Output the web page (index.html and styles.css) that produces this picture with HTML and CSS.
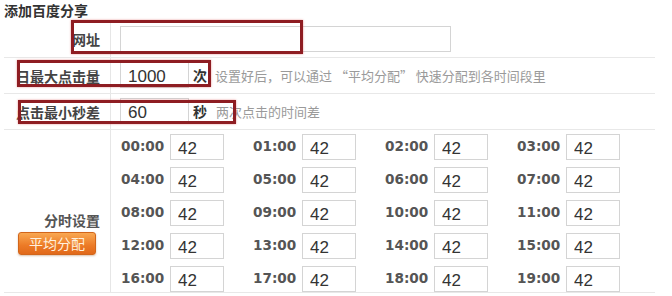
FILE: index.html
```html
<!DOCTYPE html>
<html lang="zh-CN">
<head>
<meta charset="utf-8">
<title>添加百度分享</title>
<link rel="stylesheet" href="styles.css">
</head>
<body>
<div class="page">
  <h1 class="title">添加百度分享</h1>
  <div class="form">
    <div class="row row-first">
      <div class="label">网址</div>
      <div class="field"><input class="txt url" type="text" value=""></div>
    </div>
    <div class="row">
      <div class="label">日最大点击量</div>
      <div class="field">
        <input class="txt num" type="text" value="1000">
        <span class="unit">次</span>
        <span class="hint">设置好后，可以通过 “平均分配” 快速分配到各时间段里</span>
      </div>
    </div>
    <div class="row">
      <div class="label">点击最小秒差</div>
      <div class="field">
        <input class="txt num" type="text" value="60">
        <span class="unit">秒</span>
        <span class="hint hint-2">两次点击的时间差</span>
      </div>
    </div>
    <div class="row row-grid">
      <div class="label label-grid">
        <span class="grid-title">分时设置</span>
        <button class="btn" type="button">平均分配</button>
      </div>
      <div class="field field-grid">
        <div class="hours">
          <div class="hour"><span class="time">00:00</span><input class="txt h" type="text" value="42"></div>
          <div class="hour"><span class="time">01:00</span><input class="txt h" type="text" value="42"></div>
          <div class="hour"><span class="time">02:00</span><input class="txt h" type="text" value="42"></div>
          <div class="hour"><span class="time">03:00</span><input class="txt h" type="text" value="42"></div>
          <div class="hour"><span class="time">04:00</span><input class="txt h" type="text" value="42"></div>
          <div class="hour"><span class="time">05:00</span><input class="txt h" type="text" value="42"></div>
          <div class="hour"><span class="time">06:00</span><input class="txt h" type="text" value="42"></div>
          <div class="hour"><span class="time">07:00</span><input class="txt h" type="text" value="42"></div>
          <div class="hour"><span class="time">08:00</span><input class="txt h" type="text" value="42"></div>
          <div class="hour"><span class="time">09:00</span><input class="txt h" type="text" value="42"></div>
          <div class="hour"><span class="time">10:00</span><input class="txt h" type="text" value="42"></div>
          <div class="hour"><span class="time">11:00</span><input class="txt h" type="text" value="42"></div>
          <div class="hour"><span class="time">12:00</span><input class="txt h" type="text" value="42"></div>
          <div class="hour"><span class="time">13:00</span><input class="txt h" type="text" value="42"></div>
          <div class="hour"><span class="time">14:00</span><input class="txt h" type="text" value="42"></div>
          <div class="hour"><span class="time">15:00</span><input class="txt h" type="text" value="42"></div>
          <div class="hour"><span class="time">16:00</span><input class="txt h" type="text" value="42"></div>
          <div class="hour"><span class="time">17:00</span><input class="txt h" type="text" value="42"></div>
          <div class="hour"><span class="time">18:00</span><input class="txt h" type="text" value="42"></div>
          <div class="hour"><span class="time">19:00</span><input class="txt h" type="text" value="42"></div>
        </div>
      </div>
    </div>
  </div>
  <div class="mark mark-1"></div>
  <div class="mark mark-2"></div>
  <div class="mark mark-3"></div>
</div>
</body>
</html>
```
FILE: styles.css
```css
html, body {
  margin: 0;
  padding: 0;
  background: #fff;
}
body {
  font-family: "Noto Sans CJK SC", "Liberation Sans", sans-serif;
  color: #333;
  overflow: hidden;
}
.page {
  position: relative;
  width: 672px;
  height: 296px;
}
.title {
  margin: 0;
  padding-left: 4px;
  font-size: 14px;
  line-height: 21px;
  height: 21px;
  font-weight: bold;
  color: #333;
}
.form {
  margin-left: 4px;
  width: 651px;
}
.row {
  display: grid;
  grid-template-columns: 107px 1fr;
  border-bottom: 1px solid #e8e8e8;
}
.label {
  border-right: 1px solid #e6e6e6;
  padding-right: 10px;
  display: flex;
  align-items: center;
  justify-content: flex-end;
  font-size: 14px;
  font-weight: bold;
  color: #444;
  white-space: nowrap;
}
.field {
  display: flex;
  align-items: center;
  padding: 4px 0 5px 9px;
}
.row-first .field {
  padding: 5px 0 5px 9px;
}
.txt {
  box-sizing: border-box;
  height: 26px;
  margin: 0;
  border: 1px solid #d4d4d4;
  padding: 4px 0 0 7px;
  font-family: "Liberation Sans", Arial, sans-serif;
  font-size: 17px;
  color: #333;
  background: #fff;
  outline: none;
}
.url {
  width: 331px;
}
.num {
  width: 69px;
}
.unit {
  margin-left: 4px;
  font-size: 14px;
  font-weight: bold;
  color: #333;
}
.hint {
  margin-left: 8px;
  font-size: 13px;
  color: #9a9a9a;
}
.hint-2 {
  margin-left: 9px;
}
.label-grid {
  flex-direction: column;
  align-items: flex-end;
  justify-content: flex-start;
  padding-top: 81px;
}
.grid-title {
  font-size: 14px;
  line-height: 18px;
  color: #555;
}
.btn {
  margin: 3px 4px 0 0;
  width: 78px;
  height: 23px;
  padding: 0;
  border: 1px solid #d2661b;
  border-radius: 3px;
  background: linear-gradient(#f9a852, #ec7a26 60%, #e1691a);
  box-shadow: 0 1px 2px rgba(150, 80, 20, 0.35);
  font-family: "Noto Sans CJK SC", sans-serif;
  font-size: 14px;
  font-weight: normal;
  color: #fff1df;
  line-height: 21px;
}
.field-grid {
  display: block;
  padding: 4px 0 0 10px;
}
.hours {
  display: grid;
  grid-template-columns: repeat(4, 132px);
  row-gap: 7px;
}
.hour {
  display: flex;
  align-items: center;
}
.time {
  width: 49px;
  flex: none;
  font-family: "DejaVu Sans", Verdana, sans-serif;
  font-weight: bold;
  font-size: 13.6px;
  color: #555;
  position: relative;
  top: -1px;
}
.h {
  width: 54px;
}
.mark {
  position: absolute;
  box-sizing: border-box;
  border: 3px solid #8e1d22;
  box-shadow: 0 0 2px rgba(220, 80, 80, 0.6);
}
.mark-1 {
  left: 71px;
  top: 20px;
  width: 232px;
  height: 34px;
}
.mark-2 {
  left: 17px;
  top: 60px;
  width: 194px;
  height: 27px;
}
.mark-3 {
  left: 18px;
  top: 100px;
  width: 218px;
  height: 24px;
}
```
